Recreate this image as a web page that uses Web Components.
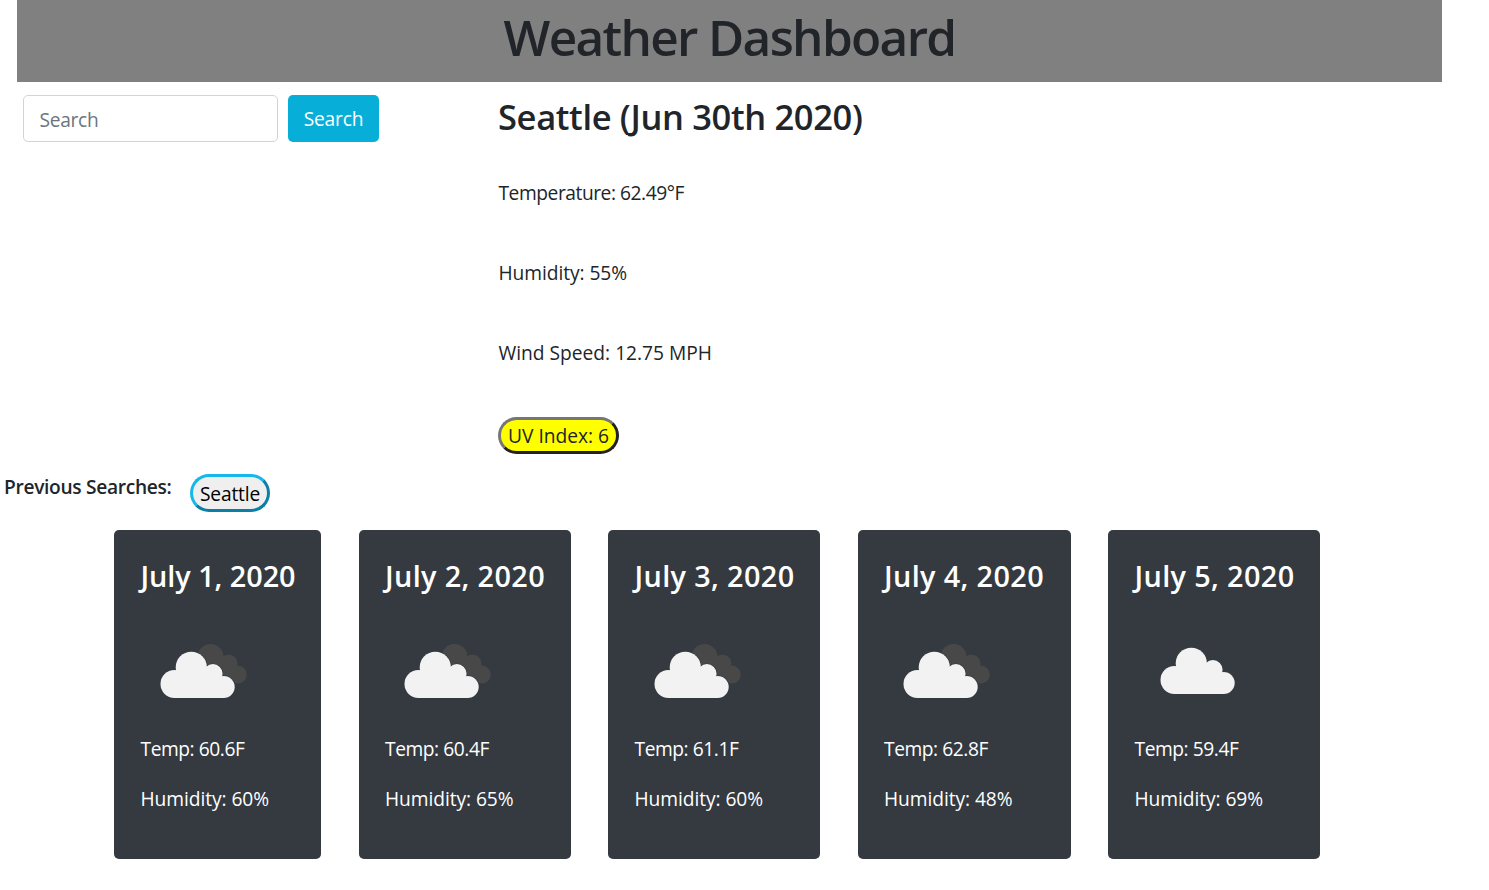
<!DOCTYPE html>
<html lang="en">
<head>
<meta charset="utf-8">
<title>Weather Dashboard</title>
<style>
  html, body { margin: 0; padding: 0; background: #fff; }
  body { font: 400 19.2px/30px "Open Sans", "Noto Sans", sans-serif; color: #212529; height: 890px; overflow: hidden; }
</style>
</head>
<body>
<weather-app></weather-app>
<script>
const attach = (el, html) => { const r = el.attachShadow({ mode: "open" }); const t = document.createElement("template"); t.innerHTML = html; r.append(t.content.cloneNode(true)); return r; };

/* Text tracked so that its line takes exactly the width it is given. */
class FitText extends HTMLElement {
  connectedCallback() {
    if (this.shadowRoot) return;
    attach(this, `<style>:host{display:inline-block;white-space:nowrap;width:max-content;text-align:left}</style><span><slot></slot></span>`);
    const span = this.shadowRoot.querySelector("span");
    const target = parseFloat(this.getAttribute("w"));
    const n = this.textContent.length;
    span.style.letterSpacing = ((target - span.getBoundingClientRect().width) / n).toFixed(4) + "px";
    this.style.width = target + "px";
  }
}

class PageBanner extends HTMLElement {
  constructor() { super(); attach(this, `<style>
    :host{display:block;box-sizing:border-box;margin-left:17px;width:1425px;height:82px;background:#808080}
    h1{margin:0;padding-top:6px;font-size:49.5px;font-weight:570;line-height:62px;text-align:center}
  </style><h1><slot></slot></h1>`); }
}

class SearchForm extends HTMLElement {
  constructor() { super(); attach(this, `<style>
    :host{display:block}
    form{display:flex;gap:10px;margin:0}
    .field{box-sizing:border-box;width:255px;height:47px;border:1px solid #ced4da;border-radius:5px;padding:9px 15px 0 15.5px;color:#6c757d;background:#fff}
    button{box-sizing:border-box;width:91px;height:47px;border:0;border-radius:5px;background:#07aed8;color:#fff;font:inherit;line-height:30px;padding:0}
  </style><form><div class="field" role="textbox"><fit-text w="59">Search</fit-text></div><button type="button"><fit-text w="59.5">Search</fit-text></button></form>`); }
}

class PillButton extends HTMLElement {
  constructor() { super(); attach(this, `<style>
    :host{display:block}
    button{display:block;box-sizing:border-box;width:var(--pill-w);height:var(--pill-h);padding:var(--pill-pad, 0) 0 0;border:3px solid;border-color:var(--pill-light) var(--pill-dark) var(--pill-dark) var(--pill-light);border-radius:20px;background:var(--pill-bg);color:var(--pill-ink);font:inherit;line-height:30px}
  </style><button type="button"><slot></slot></button>`); }
}

class CurrentConditions extends HTMLElement {
  constructor() { super(); attach(this, `<style>
    :host{display:block}
    h2{margin:0 0 41px;font-size:34.5px;font-weight:570;line-height:40px}
    p{margin:0 0 50px;height:30px;padding-left:.5px}
    pill-button{--pill-w:121px;--pill-h:37px;--pill-light:#767676;--pill-dark:#212121;--pill-bg:#ff0;--pill-ink:#212529;margin-top:-1px}
  </style>
  <h2><fit-text w="364.5">Seattle (Jun 30th 2020)</fit-text></h2>
  <p><fit-text w="185.5">Temperature: 62.49°F</fit-text></p>
  <p><fit-text w="128.5">Humidity: 55%</fit-text></p>
  <p><fit-text w="213.5">Wind Speed: 12.75 MPH</fit-text></p>
  <pill-button><fit-text w="101">UV Index: 6</fit-text></pill-button>`); }
}

class SearchHistory extends HTMLElement {
  constructor() { super(); attach(this, `<style>
    :host{display:flex;align-items:flex-start;padding-left:4px;height:58px}
    h6{margin:0;width:186px;font-size:19.2px;font-weight:570;line-height:30px}
    pill-button{--pill-w:80px;--pill-h:38px;--pill-light:#16b7ea;--pill-dark:#0b7fa6;--pill-bg:#efefef;--pill-ink:#000;--pill-pad:2px;margin-top:2px}
  </style><h6><fit-text w="167.5">Previous Searches:</fit-text></h6><pill-button><fit-text w="60">Seattle</fit-text></pill-button>`); }
}

const cloud = `<circle cx="34" cy="71" r="14"/><circle cx="50.8" cy="54.3" r="15.6"/><circle cx="72.4" cy="60.8" r="9.7"/><circle cx="83.2" cy="74" r="11"/><path d="M34 60H50L72 56L83 68V85H34Z"/>`;
class WeatherIcon extends HTMLElement {
  connectedCallback() {
    if (this.shadowRoot) return;
    const broken = this.getAttribute("kind") === "broken";
    attach(this, `<style>:host{display:block;width:120px;height:120px}svg{display:block}</style>
    <svg width="120" height="120" viewBox="0.5 0 120 120">${broken
      ? `<g fill="#484848"><circle cx="70" cy="44" r="13"/><circle cx="88" cy="50.5" r="9"/><circle cx="97.3" cy="61.6" r="9"/><path d="M70 50L88 50L97 62L92 70H70Z"/></g><g fill="#343a40" stroke="#343a40" stroke-width="1.4">${cloud}</g><g fill="#f2f2f2">${cloud}</g>`
      : `<g fill="#f2f2f2" transform="translate(6 -4)">${cloud}</g>`}</svg>`);
  }
}

class ForecastCard extends HTMLElement {
  connectedCallback() {
    if (this.shadowRoot) return;
    const a = n => this.getAttribute(n);
    attach(this, `<style>
    :host{display:block;box-sizing:border-box;width:${a("width")}px;height:329px;padding:28px 0 0 26.5px;border-radius:5px;background:#343a40;color:#fff}
    h5{margin:0 0 20px;font-size:28.8px;font-weight:600;line-height:35px}
    weather-icon{margin-bottom:1px}
    p{margin:0 0 20px;height:30px}
  </style>
  <h5><fit-text w="${a("datew")}">${a("date")}</fit-text></h5>
  <weather-icon kind="${a("kind")}"></weather-icon>
  <p><fit-text w="104">Temp: ${a("temp")}F</fit-text></p>
  <p><fit-text w="128.5">Humidity: ${a("humidity")}%</fit-text></p>`);
  }
}

class ForecastRow extends HTMLElement {
  constructor() { super(); attach(this, `<style>:host{display:flex;width:1206px;margin-left:114px;justify-content:space-between}</style><slot></slot>`); }
}

class WeatherApp extends HTMLElement {
  constructor() { super(); attach(this, `<style>
    :host{display:block}
    .top{display:grid;grid-template-columns:475px 1fr;padding-left:23px;height:390px}
    search-form{padding-top:13px}
    current-conditions{padding-top:15px}
  </style>
  <page-banner><fit-text w="452">Weather Dashboard</fit-text></page-banner>
  <div class="top"><search-form></search-form><current-conditions></current-conditions></div>
  <search-history></search-history>
  <forecast-row>
    <forecast-card width="207" datew="155" date="July 1, 2020" kind="broken" temp="60.6" humidity="60"></forecast-card>
    <forecast-card width="212" datew="160" date="July 2, 2020" kind="broken" temp="60.4" humidity="65"></forecast-card>
    <forecast-card width="212" datew="160" date="July 3, 2020" kind="broken" temp="61.1" humidity="60"></forecast-card>
    <forecast-card width="213" datew="160" date="July 4, 2020" kind="broken" temp="62.8" humidity="48"></forecast-card>
    <forecast-card width="212" datew="160" date="July 5, 2020" kind="clouds" temp="59.4" humidity="69"></forecast-card>
  </forecast-row>`); }
}

customElements.define("fit-text", FitText);
customElements.define("page-banner", PageBanner);
customElements.define("pill-button", PillButton);
customElements.define("search-form", SearchForm);
customElements.define("current-conditions", CurrentConditions);
customElements.define("search-history", SearchHistory);
customElements.define("weather-icon", WeatherIcon);
customElements.define("forecast-card", ForecastCard);
customElements.define("forecast-row", ForecastRow);
customElements.define("weather-app", WeatherApp);
</script>
</body>
</html>
